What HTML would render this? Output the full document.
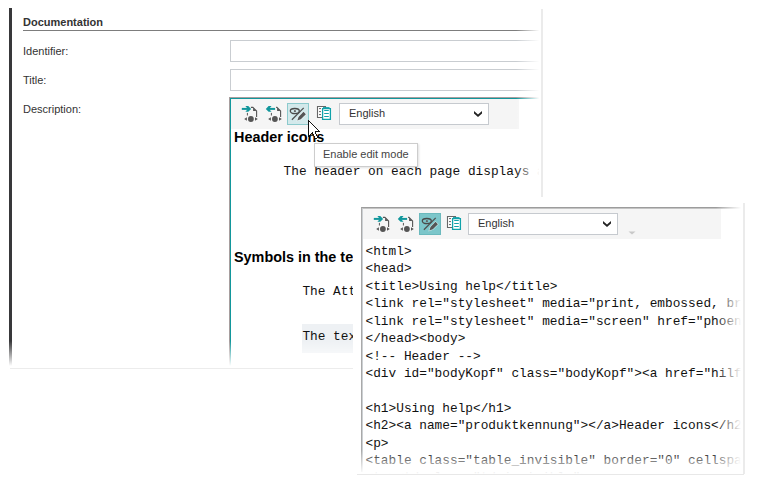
<!DOCTYPE html>
<html><head><meta charset="utf-8">
<style>
*{margin:0;padding:0;box-sizing:border-box}
html,body{width:758px;height:487px;overflow:hidden;background:#fff}
body{position:relative;font-family:"Liberation Sans",sans-serif;color:#333}
.a{position:absolute}
svg.a{overflow:visible}
.lbl{position:absolute;font-size:11px;line-height:13px;color:#333;white-space:nowrap}
.mono{font-family:"Liberation Mono",monospace;white-space:pre}
.h{position:absolute;font-weight:bold;font-size:14.4px;line-height:17px;color:#000;white-space:nowrap}
.sel{position:absolute;width:150px;height:22px;background:#fff;border:1px solid #c6cacf}
.sel span{position:absolute;left:9px;top:2.8px;font-size:11px;line-height:13px;color:#333}
.sel svg{position:absolute;left:134px;top:7px}
</style></head>
<body>

<!-- PANEL 1 -->
<div class="a" style="left:9px;top:8px;width:3px;height:358px;background:#38383a"></div>
<div class="lbl" style="left:23px;top:16px;font-weight:bold">Documentation</div>
<div class="a" style="left:23px;top:30px;width:520px;height:1px;background:#7d7d7d"></div>
<div class="lbl" style="left:23px;top:45px">Identifier:</div>
<div class="a" style="left:230px;top:40px;width:330px;height:22px;border:1px solid #c9cdd1"></div>
<div class="lbl" style="left:23px;top:74px">Title:</div>
<div class="a" style="left:230px;top:69px;width:330px;height:22px;border:1px solid #c9cdd1"></div>
<div class="lbl" style="left:23px;top:103px">Description:</div>

<div class="a" style="left:229px;top:97px;width:340px;height:300px;border-left:1px solid #a89e9e;border-top:1px solid #a89e9e"></div>
<div class="a" style="left:230px;top:98px;width:340px;height:300px;border-left:1.4px solid #12979c;border-top:1.4px solid #12979c"></div>
<div class="a" style="left:231px;top:99px;width:288px;height:30px;background:#f5f5f5"></div>
<svg class="a" style="left:240px;top:103px" width="20" height="20" viewBox="0 0 20 20"><path d="M1.8 4.9H8.2V6.9H1.8Z" fill="#12979c"/><path d="M5.4 3.1H8.3L11.1 5.9L8.3 8.7H5.4L7.8 5.9Z" fill="#12979c"/><path d="M10.9 4.4H12.9L16.6 8V13.9" stroke="#555" stroke-width="1.1" fill="none"/><path d="M13.1 4.8V7.9H16.4Z" fill="#555"/><path d="M7.4 9.9V12.5" stroke="#555" stroke-width="1"/><circle cx="10.9" cy="16" r="2.9" fill="#555"/><path d="M4.2 16L6.9 14.2V17.8Z" fill="#555"/><path d="M17.8 16L15 14.2V17.8Z" fill="#555"/></svg><svg class="a" style="left:264px;top:103px" width="20" height="20" viewBox="0 0 20 20"><path d="M4.7 4.9H11.1V6.9H4.7Z" fill="#12979c"/><path d="M7.5 3.1H4.6L1.8 5.9L4.6 8.7H7.5L5.1 5.9Z" fill="#12979c"/><path d="M12.1 4.4H12.9L16.6 8V13.9" stroke="#555" stroke-width="1.1" fill="none"/><path d="M13.1 4.8V7.9H16.4Z" fill="#555"/><path d="M7.4 9.9V12.5" stroke="#555" stroke-width="1"/><circle cx="10.9" cy="16" r="2.9" fill="#555"/><path d="M4.2 16L6.9 14.2V17.8Z" fill="#555"/><path d="M17.8 16L15 14.2V17.8Z" fill="#555"/></svg><div class="a" style="left:287px;top:103px;width:22px;height:22px;background:#d3e9eb;border:1px solid #8ccacd"></div><svg class="a" style="left:287px;top:103px" width="22" height="22" viewBox="0 0 22 22"><ellipse cx="7.8" cy="8.1" rx="4.5" ry="2.6" stroke="#4a4a4a" stroke-width="1.3" fill="none"/><circle cx="7.9" cy="8.2" r="1.1" fill="#666"/><path d="M16.7 4.9L4.9 16.7" stroke="#505050" stroke-width="1.3"/><path d="M16.5 8.8L18.9 11.2L13.8 16.3L10.3 17.6L11.5 14Z" fill="none" stroke="#fff" stroke-width="1.2" stroke-opacity=".6"/><path d="M16.5 8.8L18.9 11.2L13.8 16.3L10.3 17.6L11.5 14Z" fill="#555"/></svg><svg class="a" style="left:317px;top:106px" width="16" height="16" viewBox="0 0 16 16"><path d="M0.5 0.5H8.5V11.5H0.5Z" stroke="#666" stroke-width="1.1" fill="#fff"/><path d="M2 2.6H4M2 5.6H4M2 8.6H4" stroke="#666" stroke-width="1"/><path d="M5.6 2.6H13.4V13.4H5.6Z" stroke="#10a2aa" stroke-width="1.3" fill="#fff"/><path d="M6 1.5H12.5" stroke="#10a2aa" stroke-width=".9"/><path d="M7.2 4.5H11.8M7.2 7.5H11.8M7.2 10.5H11.8" stroke="#10a2aa" stroke-width="1"/></svg>
<div class="sel" style="left:339px;top:103px"><span>English</span><svg width="8" height="6" viewBox="0 0 8 6"><path d="M0 0.1L4 3.4L8 0.1V2.5L4 5.9L0 2.5Z" fill="#222"/></svg></div>

<div class="h" style="left:234px;top:129px">Header icons</div>
<div class="a mono" style="left:283.6px;top:163.5px;font-size:12.8px;line-height:15px;color:#111">The header on each page displays a</div>
<div class="h" style="left:234px;top:249px">Symbols in the text</div>
<div class="a mono" style="left:302.4px;top:284px;font-size:12.8px;line-height:15px;color:#111">The Attribute</div>
<div class="a" style="left:302px;top:324px;width:60px;height:29px;background:#eef1f4"></div>
<div class="a mono" style="left:302.4px;top:329px;font-size:12.8px;line-height:15px;color:#111">The text</div>

<!-- tooltip -->
<div class="a" style="left:314px;top:143px;width:104px;height:24px;background:#fff;border:1px solid #cdcdcd;box-shadow:1px 1px 2px rgba(0,0,0,.12)"></div>
<div class="lbl" style="left:323px;top:148px;color:#444">Enable edit mode</div>

<!-- cursor -->
<svg class="a" style="left:308px;top:120px" width="12" height="19" viewBox="0 0 12 19" shape-rendering="crispEdges"><rect x="0" y="0" width="1" height="1" fill="#111"/><rect x="0" y="1" width="2" height="1" fill="#111"/><rect x="0" y="2" width="1" height="1" fill="#111"/><rect x="1" y="2" width="1" height="1" fill="#fff"/><rect x="2" y="2" width="1" height="1" fill="#111"/><rect x="0" y="3" width="1" height="1" fill="#111"/><rect x="1" y="3" width="2" height="1" fill="#fff"/><rect x="3" y="3" width="1" height="1" fill="#111"/><rect x="0" y="4" width="1" height="1" fill="#111"/><rect x="1" y="4" width="3" height="1" fill="#fff"/><rect x="4" y="4" width="1" height="1" fill="#111"/><rect x="0" y="5" width="1" height="1" fill="#111"/><rect x="1" y="5" width="4" height="1" fill="#fff"/><rect x="5" y="5" width="1" height="1" fill="#111"/><rect x="0" y="6" width="1" height="1" fill="#111"/><rect x="1" y="6" width="5" height="1" fill="#fff"/><rect x="6" y="6" width="1" height="1" fill="#111"/><rect x="0" y="7" width="1" height="1" fill="#111"/><rect x="1" y="7" width="6" height="1" fill="#fff"/><rect x="7" y="7" width="1" height="1" fill="#111"/><rect x="0" y="8" width="1" height="1" fill="#111"/><rect x="1" y="8" width="7" height="1" fill="#fff"/><rect x="8" y="8" width="1" height="1" fill="#111"/><rect x="0" y="9" width="1" height="1" fill="#111"/><rect x="1" y="9" width="8" height="1" fill="#fff"/><rect x="9" y="9" width="1" height="1" fill="#111"/><rect x="0" y="10" width="1" height="1" fill="#111"/><rect x="1" y="10" width="9" height="1" fill="#fff"/><rect x="10" y="10" width="1" height="1" fill="#111"/><rect x="0" y="11" width="1" height="1" fill="#111"/><rect x="1" y="11" width="6" height="1" fill="#fff"/><rect x="7" y="11" width="5" height="1" fill="#111"/><rect x="0" y="12" width="1" height="1" fill="#111"/><rect x="1" y="12" width="3" height="1" fill="#fff"/><rect x="4" y="12" width="1" height="1" fill="#111"/><rect x="5" y="12" width="2" height="1" fill="#fff"/><rect x="7" y="12" width="1" height="1" fill="#111"/><rect x="0" y="13" width="1" height="1" fill="#111"/><rect x="1" y="13" width="2" height="1" fill="#fff"/><rect x="3" y="13" width="2" height="1" fill="#111"/><rect x="5" y="13" width="2" height="1" fill="#fff"/><rect x="7" y="13" width="1" height="1" fill="#111"/><rect x="0" y="14" width="1" height="1" fill="#111"/><rect x="1" y="14" width="1" height="1" fill="#fff"/><rect x="2" y="14" width="1" height="1" fill="#111"/><rect x="5" y="14" width="1" height="1" fill="#111"/><rect x="6" y="14" width="2" height="1" fill="#fff"/><rect x="8" y="14" width="1" height="1" fill="#111"/><rect x="0" y="15" width="2" height="1" fill="#111"/><rect x="5" y="15" width="1" height="1" fill="#111"/><rect x="6" y="15" width="2" height="1" fill="#fff"/><rect x="8" y="15" width="1" height="1" fill="#111"/><rect x="0" y="16" width="1" height="1" fill="#111"/><rect x="6" y="16" width="1" height="1" fill="#111"/><rect x="7" y="16" width="2" height="1" fill="#fff"/><rect x="9" y="16" width="1" height="1" fill="#111"/><rect x="6" y="17" width="1" height="1" fill="#111"/><rect x="7" y="17" width="2" height="1" fill="#fff"/><rect x="9" y="17" width="1" height="1" fill="#111"/><rect x="7" y="18" width="2" height="1" fill="#111"/></svg>

<!-- fades panel 1 -->
<div class="a" style="left:516px;top:0;width:26px;height:200px;background:linear-gradient(to right,rgba(255,255,255,0),#fff 90%)"></div>
<div class="a" style="left:542px;top:0;width:220px;height:200px;background:#fff"></div>
<div class="a" style="left:0;top:341px;width:360px;height:26px;background:linear-gradient(to bottom,rgba(255,255,255,0),#fff 96%)"></div>
<div class="a" style="left:0;top:367px;width:360px;height:120px;background:#fff"></div>
<div class="a" style="left:541px;top:9px;width:2px;height:188px;background:#ebebeb"></div>
<div class="a" style="left:10px;top:368px;width:343px;height:1px;background:#ececec"></div>

<!-- PANEL 2 -->
<div class="a" style="left:353px;top:197px;width:390px;height:277px;background:#fff"></div>
<div class="a" style="left:743px;top:203px;width:1.5px;height:271px;background:#e6e6e6"></div>
<div class="a" style="left:357px;top:474px;width:387px;height:1px;background:#e6e6e6"></div>
<div class="a" style="left:361px;top:207px;width:380px;height:265px;border-left:1px solid #a9a9a9;border-top:1px solid #9c9c9c"></div>
<div class="a" style="left:362px;top:208px;width:379px;height:264px;border-left:1px solid #ccd0d3;border-top:1px solid #c4c4c4"></div>
<div class="a" style="left:363px;top:209px;width:358px;height:30px;background:#f5f5f5"></div>
<svg class="a" style="left:372px;top:213px" width="20" height="20" viewBox="0 0 20 20"><path d="M1.8 4.9H8.2V6.9H1.8Z" fill="#12979c"/><path d="M5.4 3.1H8.3L11.1 5.9L8.3 8.7H5.4L7.8 5.9Z" fill="#12979c"/><path d="M10.9 4.4H12.9L16.6 8V13.9" stroke="#555" stroke-width="1.1" fill="none"/><path d="M13.1 4.8V7.9H16.4Z" fill="#555"/><path d="M7.4 9.9V12.5" stroke="#555" stroke-width="1"/><circle cx="10.9" cy="16" r="2.9" fill="#555"/><path d="M4.2 16L6.9 14.2V17.8Z" fill="#555"/><path d="M17.8 16L15 14.2V17.8Z" fill="#555"/></svg><svg class="a" style="left:396px;top:213px" width="20" height="20" viewBox="0 0 20 20"><path d="M4.7 4.9H11.1V6.9H4.7Z" fill="#12979c"/><path d="M7.5 3.1H4.6L1.8 5.9L4.6 8.7H7.5L5.1 5.9Z" fill="#12979c"/><path d="M12.1 4.4H12.9L16.6 8V13.9" stroke="#555" stroke-width="1.1" fill="none"/><path d="M13.1 4.8V7.9H16.4Z" fill="#555"/><path d="M7.4 9.9V12.5" stroke="#555" stroke-width="1"/><circle cx="10.9" cy="16" r="2.9" fill="#555"/><path d="M4.2 16L6.9 14.2V17.8Z" fill="#555"/><path d="M17.8 16L15 14.2V17.8Z" fill="#555"/></svg><div class="a" style="left:419px;top:213px;width:22px;height:22px;background:#7cc6ca;border:1px solid #6bb9bd"></div><svg class="a" style="left:419px;top:213px" width="22" height="22" viewBox="0 0 22 22"><ellipse cx="7.8" cy="8.1" rx="4.5" ry="2.6" stroke="#4a4a4a" stroke-width="1.3" fill="none"/><circle cx="7.9" cy="8.2" r="1.1" fill="#666"/><path d="M16.7 4.9L4.9 16.7" stroke="#505050" stroke-width="1.3"/><path d="M16.5 8.8L18.9 11.2L13.8 16.3L10.3 17.6L11.5 14Z" fill="none" stroke="#fff" stroke-width="1.2" stroke-opacity=".6"/><path d="M16.5 8.8L18.9 11.2L13.8 16.3L10.3 17.6L11.5 14Z" fill="#555"/></svg><svg class="a" style="left:447px;top:216px" width="16" height="16" viewBox="0 0 16 16"><path d="M0.5 0.5H8.5V11.5H0.5Z" stroke="#666" stroke-width="1.1" fill="#fff"/><path d="M2 2.6H4M2 5.6H4M2 8.6H4" stroke="#666" stroke-width="1"/><path d="M5.6 2.6H13.4V13.4H5.6Z" stroke="#10a2aa" stroke-width="1.3" fill="#fff"/><path d="M6 1.5H12.5" stroke="#10a2aa" stroke-width=".9"/><path d="M7.2 4.5H11.8M7.2 7.5H11.8M7.2 10.5H11.8" stroke="#10a2aa" stroke-width="1"/></svg>
<div class="sel" style="left:468px;top:213px"><span>English</span><svg width="8" height="6" viewBox="0 0 8 6"><path d="M0 0.1L4 3.4L8 0.1V2.5L4 5.9L0 2.5Z" fill="#222"/></svg></div>
<svg class="a" style="left:628px;top:231px" width="8" height="4" viewBox="0 0 8 4"><path d="M0.5 0.5H7.5L4 3.5Z" fill="#c8c8c8"/></svg>

<div class="a mono" style="left:365.5px;top:243px;font-size:12.8px;line-height:17.42px;color:#111">&lt;html&gt;
&lt;head&gt;
&lt;title&gt;Using help&lt;/title&gt;
&lt;link rel="stylesheet" media="print, embossed, braille" href=
&lt;link rel="stylesheet" media="screen" href="phoenix.css"&gt;
&lt;/head&gt;&lt;body&gt;
&lt;!-- Header --&gt;
&lt;div id="bodyKopf" class="bodyKopf"&gt;&lt;a href="hilfe.html"&gt;

&lt;h1&gt;Using help&lt;/h1&gt;
&lt;h2&gt;&lt;a name="produktkennung"&gt;&lt;/a&gt;Header icons&lt;/h2&gt;
&lt;p&gt;
&lt;table class="table_invisible" border="0" cellspacing="0"&gt;
&lt;tr&gt;&lt;td class="td_invisible"&gt;</div>

<div class="a" style="left:716px;top:200px;width:28px;height:272px;background:linear-gradient(to right,rgba(255,255,255,0),#fff 90%)"></div>
<div class="a" style="left:744px;top:197px;width:14px;height:290px;background:#fff"></div>
<div class="a" style="left:355px;top:450px;width:388px;height:24px;background:linear-gradient(to bottom,rgba(255,255,255,0),rgba(255,255,255,.88) 88%,#fff)"></div>
<div class="a" style="left:353px;top:474px;width:405px;height:13px;background:#fff"></div>
<div class="a" style="left:743px;top:203px;width:1.5px;height:271px;background:#ebebeb"></div>
<div class="a" style="left:357px;top:474px;width:387px;height:1px;background:#e8e8e8"></div>
<div class="a" style="left:716px;top:209px;width:5px;height:30px;background:#f5f5f5"></div>

</body></html>
